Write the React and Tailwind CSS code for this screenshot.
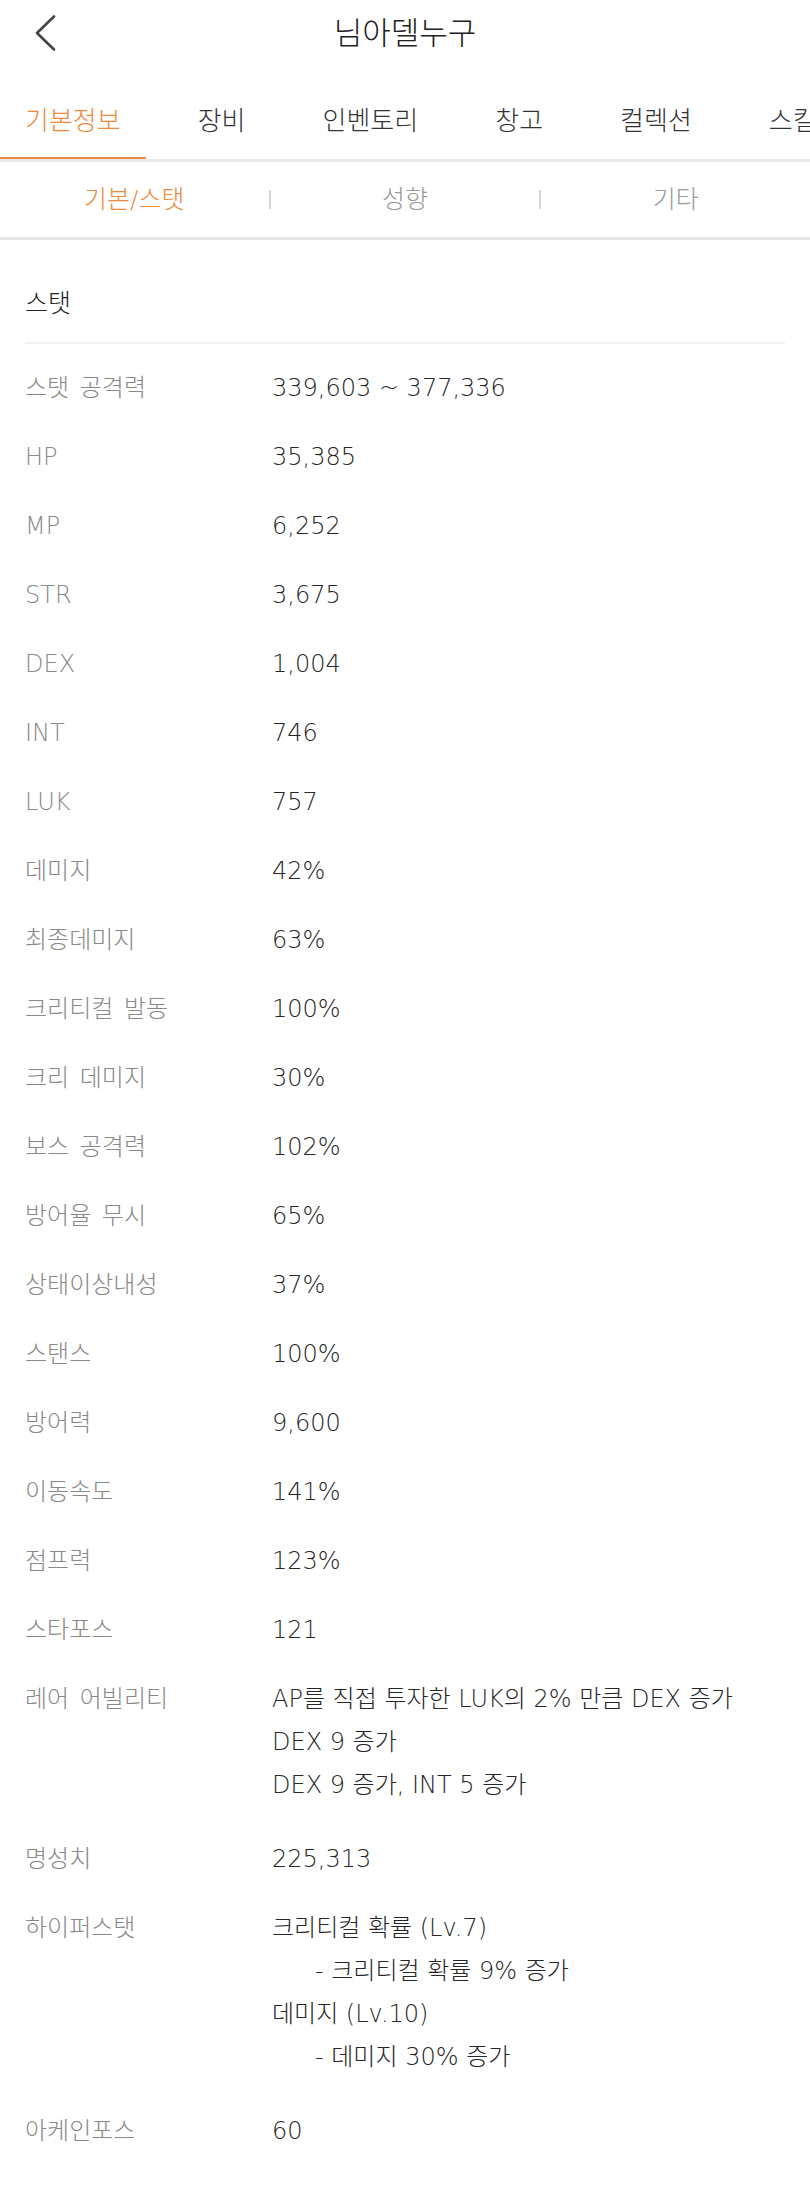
import React from 'react';

const tabs = ['기본정보', '장비', '인벤토리', '창고', '컬렉션', '스킬'];

const stats = [
  ['스탯 공격력', ['339,603 ~ 377,336']],
  ['HP', ['35,385']],
  ['MP', ['6,252']],
  ['STR', ['3,675']],
  ['DEX', ['1,004']],
  ['INT', ['746']],
  ['LUK', ['757']],
  ['데미지', ['42%']],
  ['최종데미지', ['63%']],
  ['크리티컬 발동', ['100%']],
  ['크리 데미지', ['30%']],
  ['보스 공격력', ['102%']],
  ['방어율 무시', ['65%']],
  ['상태이상내성', ['37%']],
  ['스탠스', ['100%']],
  ['방어력', ['9,600']],
  ['이동속도', ['141%']],
  ['점프력', ['123%']],
  ['스타포스', ['121']],
  ['레어 어빌리티', ['AP를 직접 투자한 LUK의 2% 만큼 DEX 증가', 'DEX 9 증가', 'DEX 9 증가, INT 5 증가']],
  ['명성치', ['225,313']],
  ['하이퍼스탯', ['크리티컬 확률 (Lv.7)', '- 크리티컬 확률 9% 증가', '데미지 (Lv.10)', '- 데미지 30% 증가']],
  ['아케인포스', ['60']],
];

function StatRow({ label, lines }) {
  const multi = lines.length > 1;
  return (
    <div className={`flex pt-[13px] ${multi ? 'pb-[18px]' : 'pb-[13px]'}`}>
      <div className="w-[247px] shrink-0 text-[24px] leading-[43px] text-[#888] [word-spacing:3px]">{label}</div>
      <div className="flex flex-col text-[24px] leading-[43px] text-[#262626]">
        {lines.map((line, i) => (
          <div key={i} className={line.startsWith('- ') ? 'pl-[43px]' : ''}>
            {line}
          </div>
        ))}
      </div>
    </div>
  );
}

export default function App() {
  return (
    <div className="w-[810px] min-h-[2186px] bg-white font-light font-['DejaVu_Sans','Noto_Sans_CJK_KR',sans-serif]">
      {/* header */}
      <header className="grid grid-cols-[90px_1fr_90px] items-center h-[66px]">
        <button className="flex items-center pl-[33px] h-full">
          <svg width="24" height="38" viewBox="0 0 24 38" fill="none">
            <path d="M21 2.5 L4 19 L21 35.5" stroke="#444" strokeWidth="2.6" strokeLinecap="round" strokeLinejoin="round" />
          </svg>
        </button>
        <h1 className="text-center text-[31px] leading-[40px] text-[#222]">님아델누구</h1>
        <div />
      </header>

      {/* main tabs */}
      <nav className="flex gap-[27px] overflow-hidden whitespace-nowrap border-b-[3px] border-[#e8e8e8]">
        {tabs.map((t, i) => (
          <div
            key={t}
            className={`shrink-0 px-[25px] pt-[37px] pb-[18px] mb-[-3px] border-b-[5px] text-[26px] leading-[36px] ${
              i === 0 ? 'border-[#ec8a3d] text-[#ec8a3d]' : 'border-transparent text-[#333]'
            }`}
          >
            {t}
          </div>
        ))}
      </nav>

      {/* sub tabs */}
      <div className="flex items-center h-[78px] border-b-[3px] border-[#e6e6e6]">
        <div className="flex-1 text-center text-[25px] text-[#ec8a3d]">기본/스탯</div>
        <div className="w-[2px] h-[19px] bg-[#d6d6d6]" />
        <div className="flex-1 text-center text-[25px] text-[#9a9a9a]">성향</div>
        <div className="w-[2px] h-[19px] bg-[#d6d6d6]" />
        <div className="flex-1 text-center text-[25px] text-[#9a9a9a]">기타</div>
      </div>

      {/* stats */}
      <section className="px-[25px]">
        <h2 className="pt-[46px] pb-[20px] text-[25px] leading-[36px] text-[#222]">스탯</h2>
        <div className="h-[2px] bg-[#f1f1f1]" />
        <div className="pt-[10px]">
          {stats.map(([label, lines]) => (
            <StatRow key={label} label={label} lines={lines} />
          ))}
        </div>
      </section>
    </div>
  );
}
